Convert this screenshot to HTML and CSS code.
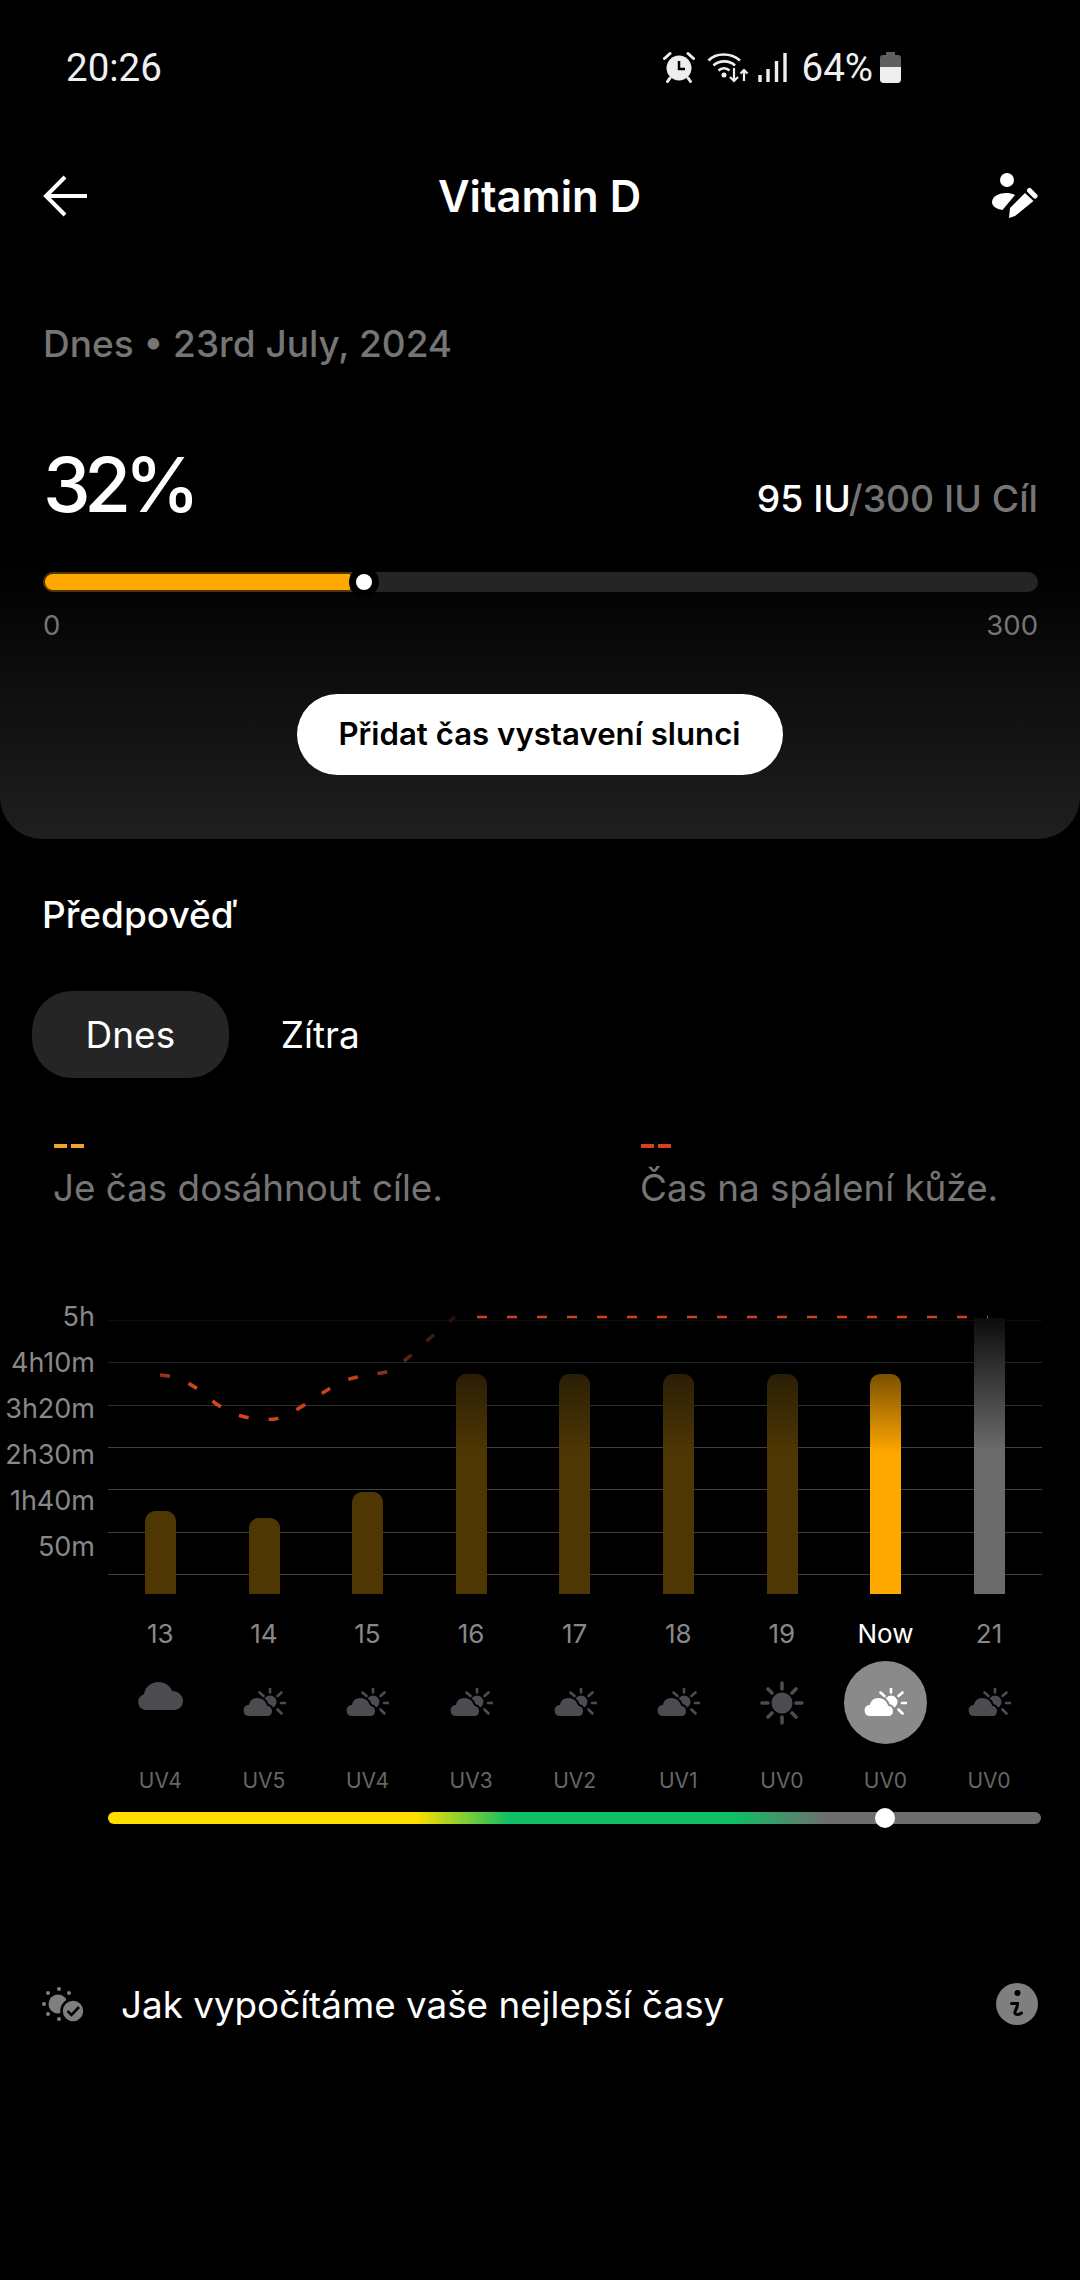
FILE: index.html
```html
<!DOCTYPE html>
<html lang="cs">
  <head>
    <meta charset="UTF-8" />
    <meta name="viewport" content="width=device-width, initial-scale=1.0" />
    <title>Vitamin D</title>
    <link rel="stylesheet" href="styles.css">
  </head>
  <body>
    <svg class="icon-defs" width="0" height="0">
      <defs>
        <symbol id="partly" viewBox="0 0 44 30">
          <circle class="wx-sun" cx="28" cy="14" r="6.5" />
          <path class="wx-front" d="M7 29a6.500 6.500 0 0 1-1-12.900C7.500 11.500 11 9 15 9c5.500 0 9.500 3.500 11 8a6.300 6.300 0 0 1 1 12z" />
          <path class="rays" d="M28 .5v4M17.500 4.500l4 3.500M39.500 4.500 35.500 8M39 15h4.500M35.500 21.500l4 4" />
        </symbol>
        <symbol id="cloud" viewBox="0 0 45 28">
          <path d="M8 28a8 8 0 0 1-2-15.700C7 5 13 0 20.500 0c6.500 0 11.500 3.500 13.500 9 6 0 11 4 11 10 0 5-4 9-9 9z" />
        </symbol>
      </defs>
    </svg>

    <div class="status-bar">
      <span class="status-time">20:26</span>
      <div class="status-right">
        <svg class="status-alarm" width="32" height="32" viewBox="0 0 32 32">
          <circle cx="16" cy="17" r="12.500" fill="#eee" />
          <path d="M16 10v8h6" fill="none" stroke="#000" stroke-width="2.500" />
          <path d="M1.500 7.500 7 2.500M30.500 7.500 25 2.500M7 27l-2.500 3.500M25 27l2.500 3.500" stroke="#eee" stroke-width="3" stroke-linecap="round" />
        </svg>
        <svg class="status-wifi" width="42" height="32" viewBox="0 0 42 32">
          <path d="M1.500 9.500C9 1.500 24 1.500 33 9.500M6.500 14.500C12 9 22.500 9 28 14.500M11.500 19.500c3-3 8-3 11 0" fill="none" stroke="#eee" stroke-width="2.600" />
          <circle cx="17" cy="24" r="2.500" fill="#eee" />
          <path d="M27 17v13M23 26l4 4 4-4M37 30V19M33.500 22.500 37 19l3.500 3.500" fill="none" stroke="#eee" stroke-width="2.200" />
        </svg>
        <svg class="status-signal" width="29" height="32" viewBox="0 0 29 32">
          <path d="M2 24v7M10 18v13M18.500 10v21M27 2v29" stroke="#eee" stroke-width="3.400" />
        </svg>
        <span>64%</span>
        <div class="battery">
          <div class="battery-cap"></div>
          <div class="battery-body"><div class="battery-fill"></div></div>
        </div>
      </div>
    </div>

    <div class="top-card">
      <header class="app-header">
        <svg width="44" height="42" viewBox="0 0 44 42">
          <path d="M22 2 3 21l19 19M3 21h41" fill="none" stroke="#fff" stroke-width="4" />
        </svg>
        <h1 class="app-title">Vitamin D</h1>
        <svg width="46" height="46" viewBox="0 0 46 46">
          <circle cx="15" cy="7" r="7" fill="#fff" />
          <path d="M0 29c0-6 8-9 14-9 3 0 6 .5 9 2L10.500 37C4 36 0 33 0 29z" fill="#fff" />
          <path d="M17 45l1-10 15-15 8.500 8L23 43z" fill="#fff" />
          <path d="M37.500 17.500 43 23" stroke="#fff" stroke-width="5" stroke-linecap="round" />
        </svg>
      </header>

      <div class="date-line">Dnes • 23rd July, 2024</div>

      <div class="summary">
        <span class="percent">32%</span>
        <span class="goal"><b>95 IU</b>/300 IU Cíl</span>
      </div>

      <div class="progress">
        <div class="progress-fill"></div>
        <div class="progress-knob"></div>
      </div>
      <div class="progress-scale">
        <span>0</span>
        <span>300</span>
      </div>

      <button class="add-btn">Přidat čas vystavení slunci</button>
    </div>

    <main class="forecast">
      <h2 class="forecast-title">Předpověď</h2>

      <div class="tabs">
        <div class="tab tab-active">Dnes</div>
        <div class="tab tab-next">Zítra</div>
      </div>

      <div class="legend">
        <div class="legend-item">
          <div class="legend-dash dash-orange"></div>
          <div class="legend-text">Je čas dosáhnout cíle.</div>
        </div>
        <div class="legend-item legend-burn">
          <div class="legend-dash dash-red"></div>
          <div class="legend-text">Čas na spálení kůže.</div>
        </div>
      </div>

      <div class="chart">
        <div class="axis">
          <span>5h</span>
          <span>4h10m</span>
          <span>3h20m</span>
          <span>2h30m</span>
          <span>1h40m</span>
          <span>50m</span>
        </div>
        <div class="plot">
          <div class="grid">
            <div class="grid-line grid-line-top"></div>
            <div class="grid-line grid-line-1"></div>
            <div class="grid-line grid-line-2"></div>
            <div class="grid-line"></div>
            <div class="grid-line"></div>
            <div class="grid-line"></div>
            <div class="grid-line"></div>
          </div>
          <div class="bars">
            <div class="bar bar-dim" style="height: 83px"></div>
            <div class="bar bar-dim" style="height: 76px"></div>
            <div class="bar bar-dim" style="height: 102px"></div>
            <div class="bar bar-dim bar-fade" style="height: 220px"></div>
            <div class="bar bar-dim bar-fade" style="height: 220px"></div>
            <div class="bar bar-dim bar-fade" style="height: 220px"></div>
            <div class="bar bar-dim bar-fade" style="height: 220px"></div>
            <div class="bar bar-now" style="height: 220px"></div>
            <div class="bar bar-next" style="height: 276px"></div>
          </div>
          <svg class="burn-line" width="934" height="120" viewBox="108 1300 934 120">
            <defs>
              <linearGradient id="burnFade" gradientUnits="userSpaceOnUse" x1="160" y1="0" x2="470" y2="0">
                <stop offset="0" stop-color="#8c3218" />
                <stop offset="0.12" stop-color="#d9481f" />
                <stop offset="0.62" stop-color="#c4401c" />
                <stop offset="0.8" stop-color="#5a2412" />
                <stop offset="0.92" stop-color="#2e150c" />
                <stop offset="1" stop-color="#140a06" />
              </linearGradient>
            </defs>
            <path d="M160 1374C180 1375 196 1385 215 1402 235 1416 255 1420 275 1418 295 1413 315 1396 340 1381 360 1374 375 1374 390 1370 410 1358 430 1335 455 1316" fill="none" stroke="url(#burnFade)" stroke-width="3.5" stroke-dasharray="10 20" />
            <path d="M477 1316H988" fill="none" stroke="#cf431e" stroke-width="2.5" stroke-dasharray="10 20" />
          </svg>
        </div>
      </div>

      <div class="hours">
        <div class="hour">
          <span class="hour-label">13</span>
          <div class="hour-icon"><svg class="wx-cloud" width="45" height="28"><use href="#cloud" /></svg></div>
          <span class="hour-uv">UV4</span>
        </div>
        <div class="hour">
          <span class="hour-label">14</span>
          <div class="hour-icon"><svg class="wx-partly" width="44" height="30"><use href="#partly" /></svg></div>
          <span class="hour-uv">UV5</span>
        </div>
        <div class="hour">
          <span class="hour-label">15</span>
          <div class="hour-icon"><svg class="wx-partly" width="44" height="30"><use href="#partly" /></svg></div>
          <span class="hour-uv">UV4</span>
        </div>
        <div class="hour">
          <span class="hour-label">16</span>
          <div class="hour-icon"><svg class="wx-partly" width="44" height="30"><use href="#partly" /></svg></div>
          <span class="hour-uv">UV3</span>
        </div>
        <div class="hour">
          <span class="hour-label">17</span>
          <div class="hour-icon"><svg class="wx-partly" width="44" height="30"><use href="#partly" /></svg></div>
          <span class="hour-uv">UV2</span>
        </div>
        <div class="hour">
          <span class="hour-label">18</span>
          <div class="hour-icon"><svg class="wx-partly" width="44" height="30"><use href="#partly" /></svg></div>
          <span class="hour-uv">UV1</span>
        </div>
        <div class="hour">
          <span class="hour-label">19</span>
          <div class="hour-icon">
            <svg width="44" height="44" viewBox="0 0 44 44">
              <circle cx="22" cy="22" r="10.500" fill="#4a4c50" />
              <path d="M22 2v6M22 36v6M2 22h6M36 22h6M8 8l4 4M32 32l4 4M36 8l-4 4M12 32l-4 4" stroke="#4a4c50" stroke-width="3.600" stroke-linecap="round" />
            </svg>
          </div>
          <span class="hour-uv">UV0</span>
        </div>
        <div class="hour hour-now">
          <span class="hour-label">Now</span>
          <div class="hour-icon"><svg class="wx-partly" width="44" height="30"><use href="#partly" /></svg></div>
          <span class="hour-uv">UV0</span>
        </div>
        <div class="hour">
          <span class="hour-label">21</span>
          <div class="hour-icon"><svg class="wx-partly" width="44" height="30"><use href="#partly" /></svg></div>
          <span class="hour-uv">UV0</span>
        </div>
      </div>

      <div class="uv-track">
        <div class="uv-knob"></div>
      </div>

      <div class="info-row">
        <svg width="44" height="40" viewBox="0 0 44 40">
          <g fill="#7f7f7f">
            <circle cx="6" cy="9" r="2" />
            <circle cx="17" cy="5" r="2" />
            <circle cx="27" cy="9" r="2" />
            <circle cx="2" cy="20" r="2" />
            <circle cx="6" cy="30" r="2" />
            <circle cx="17" cy="35" r="2" />
            <circle cx="16" cy="20" r="9.500" />
          </g>
          <circle cx="31" cy="27" r="11.500" fill="#7f7f7f" stroke="#000" stroke-width="2.500" />
          <path d="M25.500 27l4 4 7.500-8" fill="none" stroke="#000" stroke-width="2.600" />
        </svg>
        <span class="info-text">Jak vypočítáme vaše nejlepší časy</span>
        <svg width="42" height="42" viewBox="0 0 42 42">
          <circle cx="21" cy="21" r="21" fill="#7f7f7f" />
          <circle cx="21.500" cy="10" r="3" fill="#000" />
          <path d="M15.500 20.500h6c.5 4.500-3.500 7.500-2.500 10 1 1.500 4 1.500 6.500-.5" fill="none" stroke="#000" stroke-width="3" stroke-linecap="round" />
        </svg>
      </div>
    </main>
  </body>
</html>
```

FILE: styles.css
```css
* {
  box-sizing: border-box;
}

html,
body {
  margin: 0;
  padding: 0;
  background-color: #000;
}

body {
  width: 1080px;
  height: 2280px;
  overflow: hidden;
  font-family: Inter, "Noto Sans", sans-serif;
  color: #fff;
}

.icon-defs {
  position: absolute;
}

.status-bar {
  display: flex;
  justify-content: space-between;
  align-items: center;
  height: 66px;
  margin-top: 34px;
  padding: 0 179px 0 66px;
  font-family: Roboto, sans-serif;
  font-size: 38.5px;
  color: #f0f0f0;
}

.status-right {
  display: flex;
  align-items: center;
}

.status-alarm {
  margin-right: 12px;
}

.status-wifi {
  margin-right: 9px;
}

.status-signal {
  margin-right: 15px;
}

.battery {
  width: 21px;
  margin-left: 7px;
  display: flex;
  flex-direction: column;
  align-items: center;
}

.battery-cap {
  width: 9px;
  height: 3px;
  background-color: #5f5f5f;
}

.battery-body {
  width: 100%;
  height: 28px;
  border-radius: 3px 3px 4px 4px;
  background-color: #5f5f5f;
  overflow: hidden;
  display: flex;
  align-items: flex-end;
}

.battery-fill {
  width: 100%;
  height: 16px;
  background-color: #eee;
}

.top-card {
  height: 739px;
  padding: 66px 42px 0 43px;
  border-radius: 0 0 42px 42px;
  background: linear-gradient(to bottom, #000 0%, #000 62%, #1f1f1f 100%);
}

.app-header {
  display: flex;
  justify-content: space-between;
  align-items: center;
  height: 60px;
}

.app-title {
  margin: 0;
  font-size: 43.5px;
  font-weight: 600;
}

.date-line {
  margin-top: 96px;
  font-size: 37px;
  font-weight: 500;
  line-height: 44px;
  color: #757575;
}

.summary {
  display: flex;
  justify-content: space-between;
  align-items: baseline;
  margin-top: 72px;
  line-height: 92px;
}

.percent {
  font-size: 76px;
  font-weight: 500;
  letter-spacing: -6.5px;
}

.goal {
  font-size: 37.3px;
  font-weight: 500;
  color: #757575;
}

.goal b {
  font-weight: 500;
  color: #fff;
}

.progress {
  position: relative;
  height: 20px;
  margin-top: 27px;
  border-radius: 10px;
  background-color: #252525;
}

.progress-fill {
  width: 309px;
  height: 100%;
  border: 2px solid #4d3505;
  border-radius: 10px 0 0 10px;
  background-color: #ffa800;
}

.progress-knob {
  position: absolute;
  left: 306px;
  top: -5px;
  width: 30px;
  height: 30px;
  border: 7px solid #000;
  border-radius: 50%;
  background-color: #fff;
}

.progress-scale {
  display: flex;
  justify-content: space-between;
  margin-top: 17px;
  font-size: 27.5px;
  line-height: 32px;
  color: #757575;
}

.add-btn {
  display: block;
  width: 486px;
  height: 81px;
  margin: 52.5px auto 0;
  border: none;
  border-radius: 41px;
  background-color: #fff;
  color: #000;
  font-family: Inter, sans-serif;
  font-size: 31.2px;
  font-weight: 600;
  transform: translateX(-1px);
}

.forecast-title {
  margin: 54px 0 0;
  padding-left: 42px;
  font-size: 37px;
  font-weight: 500;
  line-height: 44px;
}

.tabs {
  display: flex;
  margin-top: 54px;
  padding-left: 32px;
  font-size: 37px;
}

.tab {
  height: 87px;
  padding: 0 53.5px;
  display: flex;
  align-items: center;
  border-radius: 40px;
}

.tab-active {
  background-color: #252525;
}

.tab-next {
  margin-left: -1.5px;
}

.legend {
  display: flex;
  margin-top: 66px;
  padding-left: 54px;
}

.legend-item {
  flex: none;
  width: 587px;
}

.legend-burn {
  flex: 1;
  width: auto;
}

.legend-dash {
  width: 30px;
  height: 4px;
}

.dash-orange {
  background: repeating-linear-gradient(to right, #f0a52a 0 13px, #000 13px 17px);
}

.dash-red {
  background: repeating-linear-gradient(to right, #d9401f 0 13px, #000 13px 17px);
}

.legend-text {
  margin: 18px 0 0 -1px;
  font-size: 36.8px;
  line-height: 44px;
  color: #757575;
}

.chart {
  display: flex;
  margin-top: 91px;
}

.axis {
  display: flex;
  flex-direction: column;
  width: 95px;
  font-size: 27px;
  line-height: 32px;
  color: #888;
  text-align: right;
}

.axis span {
  height: 46px;
}

.plot {
  position: relative;
  width: 934px;
  height: 273.5px;
  margin-left: 13px;
  margin-top: 19px;
}

.grid {
  position: absolute;
  left: 0;
  right: 0;
  top: 0;
  height: 255px;
  display: flex;
  flex-direction: column;
  justify-content: space-between;
}

.grid-line {
  height: 1px;
  background-color: #404040;
}

.grid-line-top {
  background-color: #0d0d0d;
}

.grid-line-1 {
  background-color: #222;
}

.grid-line-2 {
  background-color: #303030;
}

.bars {
  position: absolute;
  left: 0;
  right: 0;
  bottom: 0;
  height: 277px;
  padding-left: 37px;
  display: flex;
  gap: 72.6px;
  align-items: flex-end;
}

.bar {
  width: 31px;
  border-radius: 10px 10px 0 0;
}

.bar-dim {
  background-color: #4f3703;
}

.bar-fade {
  background: linear-gradient(to bottom, #2a1e05 0%, #4f3703 36%);
}

.bar-now {
  background: linear-gradient(to bottom, #7a5000 0%, #ffa800 36%);
}

.bar-next {
  border-radius: 0;
  background: linear-gradient(to bottom, #0c0c0c 0%, #6b6b6b 48%);
}

.burn-line {
  position: absolute;
  left: 0;
  top: -19px;
}

.hours {
  display: flex;
  margin-top: 24.5px;
  padding-left: 108.5px;
}

.hour {
  width: 103.6px;
  display: flex;
  flex-direction: column;
  align-items: center;
}

.hour-label {
  font-size: 26px;
  line-height: 32px;
  color: #888;
}

.hour-now .hour-label {
  color: #fff;
}

.hour-icon {
  --wx-color: #4a4c50;
  --wx-gap: #000;
  width: 83px;
  height: 83px;
  margin-top: 11px;
  display: flex;
  align-items: center;
  justify-content: center;
  border-radius: 50%;
}

.hour-now .hour-icon {
  --wx-color: #fff;
  --wx-gap: #8a8a8a;
  background-color: #8a8a8a;
}

.wx-cloud {
  fill: var(--wx-color);
  margin-bottom: 14px;
}

.wx-sun {
  fill: var(--wx-color);
}

.wx-front {
  fill: var(--wx-color);
  stroke: var(--wx-gap);
  stroke-width: 2;
}

.rays {
  fill: none;
  stroke: var(--wx-color);
  stroke-width: 2.6;
  stroke-linecap: round;
}

.hour-uv {
  margin-top: 24px;
  font-size: 21px;
  line-height: 26px;
  color: #666;
}

.uv-track {
  position: relative;
  width: 933px;
  height: 12px;
  margin: 18px 0 0 108px;
  border-radius: 6px;
  background: linear-gradient(to right, #ffdf00 0%, #ffdf00 33%, #0fbf63 43%, #0fbf63 67%, #6e6e6e 77%, #6e6e6e 100%);
}

.uv-knob {
  position: absolute;
  left: 767px;
  top: -4px;
  width: 20px;
  height: 20px;
  border-radius: 50%;
  background-color: #fff;
}

.info-row {
  display: flex;
  align-items: center;
  height: 44px;
  margin-top: 158px;
  padding: 0 42px;
}

.info-text {
  flex: 1;
  margin-left: 35px;
  font-size: 36.8px;
}
```
